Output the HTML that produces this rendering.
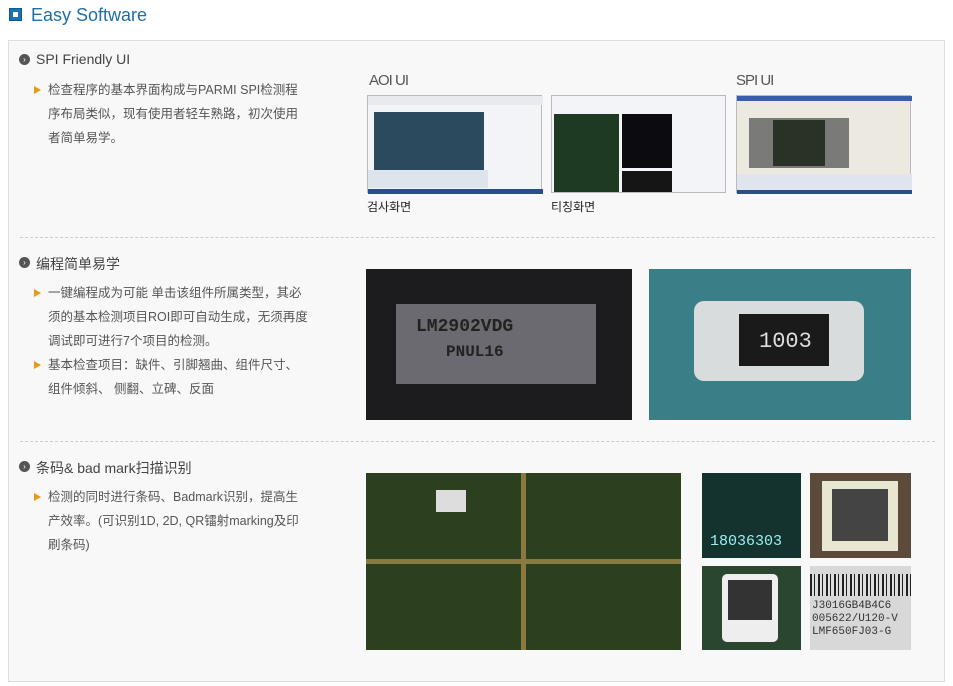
<!DOCTYPE html>
<html><head><meta charset="utf-8"><style>
*{margin:0;padding:0;box-sizing:border-box}
body{width:953px;height:686px;background:#fff;font-family:"Liberation Sans","Noto Sans CJK SC",sans-serif;position:relative;overflow:hidden}
.a{position:absolute}
.title{left:31px;top:5px;font-size:18px;color:#1f6fa6;}
.sq{left:9px;top:8px;width:13px;height:13px;background:#1a72b0;border:1px solid #0d5a90}
.sq i{position:absolute;left:3px;top:3px;width:5px;height:5px;background:#fff}
.box{left:8px;top:40px;width:937px;height:642px;background:#f8f8f8;border:1px solid #ddd}
.h{font-size:14px;color:#444;left:36px}
.dot{left:19px;width:11px;height:11px;border-radius:50%;background:#555;color:#fff;font-size:8px;line-height:11px;text-align:center}
.p{left:48px;font-size:12.5px;color:#555;line-height:24px;width:300px;white-space:nowrap}
.tri{left:34px;width:0;height:0;border-left:7px solid #e69a10;border-top:4px solid transparent;border-bottom:4px solid transparent}
.sep{left:20px;width:915px;border-top:1px dashed #ccc}
.lbl{font-size:15px;color:#555;letter-spacing:-1px}
.cap{font-size:12px;color:#222}
.img{border:1px solid #bbb}
</style></head><body>
<div class="a sq"><i></i></div>
<div class="a title">Easy Software</div>
<div class="a box"></div>

<div class="a dot" style="top:54px">›</div>
<div class="a h" style="top:51px">SPI Friendly UI</div>
<div class="a tri" style="top:86px"></div>
<div class="a p" style="top:78px">检查程序的基本界面构成与PARMI SPI检测程<br>序布局类似，现有使用者轻车熟路，初次使用<br>者简单易学。</div>
<div class="a lbl" style="left:369px;top:72px">AOI UI</div>
<div class="a lbl" style="left:736px;top:72px">SPI UI</div>
<div class="a img" style="left:367px;top:95px;width:175px;height:98px;background:#f2f4f8">
 <div class="a" style="left:6px;top:16px;width:110px;height:58px;background:#2b4a5e"></div>
 <div class="a" style="left:0;top:0;width:175px;height:9px;background:#e8eaee"></div>
 <div class="a" style="left:0;top:74px;width:120px;height:18px;background:#dde4ec"></div>
 <div class="a" style="left:0;top:93px;width:175px;height:5px;background:#2a4f88"></div>
</div>
<div class="a img" style="left:551px;top:95px;width:175px;height:98px;background:#f2f4f8">
 <div class="a" style="left:2px;top:18px;width:65px;height:78px;background:#1f3a22"></div>
 <div class="a" style="left:70px;top:18px;width:50px;height:54px;background:#0b0b10"></div>
 <div class="a" style="left:70px;top:75px;width:50px;height:21px;background:#151515"></div>
</div>
<div class="a img" style="left:736px;top:95px;width:175px;height:98px;background:#eceae0">
 <div class="a" style="left:0;top:0;width:175px;height:5px;background:#3a5fa8"></div>
 <div class="a" style="left:12px;top:22px;width:100px;height:50px;background:#7a7a78"></div>
 <div class="a" style="left:36px;top:24px;width:52px;height:46px;background:#2a3228"></div>
 <div class="a" style="left:0;top:78px;width:175px;height:16px;background:#e0e4ee"></div>
 <div class="a" style="left:0;top:94px;width:175px;height:4px;background:#2a4f88"></div>
</div>
<div class="a cap" style="left:367px;top:198px">검사화면</div>
<div class="a cap" style="left:551px;top:198px">티칭화면</div>
<div class="a sep" style="top:237px"></div>

<div class="a dot" style="top:257px">›</div>
<div class="a h" style="top:254px">编程简单易学</div>
<div class="a tri" style="top:289px"></div>
<div class="a p" style="top:281px">一键编程成为可能 单击该组件所属类型，其必<br>须的基本检测项目ROI即可自动生成，无须再度<br>调试即可进行7个项目的检测。</div>
<div class="a tri" style="top:361px"></div>
<div class="a p" style="top:353px">基本检查项目：缺件、引脚翘曲、组件尺寸、<br>组件倾斜、 侧翻、立碑、反面</div>
<div class="a" style="left:366px;top:269px;width:266px;height:151px;background:#1c1c1e">
 <div class="a" style="left:30px;top:35px;width:200px;height:80px;background:#6a6a70"></div>
 <div class="a" style="left:50px;top:48px;color:#222;font:bold 18px 'Liberation Mono',monospace">LM2902VDG</div>
 <div class="a" style="left:80px;top:74px;color:#222;font:bold 16px 'Liberation Mono',monospace">PNUL16</div>
</div>
<div class="a" style="left:649px;top:269px;width:262px;height:151px;background:#3a7e88">
 <div class="a" style="left:45px;top:32px;width:170px;height:80px;background:#d8dcdc;border-radius:10px"></div>
 <div class="a" style="left:90px;top:45px;width:90px;height:52px;background:#1a1a1a"></div>
 <div class="a" style="left:110px;top:60px;color:#ddd;font:22px 'Liberation Mono',monospace">1003</div>
</div>
<div class="a sep" style="top:441px"></div>

<div class="a dot" style="top:461px">›</div>
<div class="a h" style="top:458px">条码&amp; bad mark扫描识别</div>
<div class="a tri" style="top:493px"></div>
<div class="a p" style="top:485px">检测的同时进行条码、Badmark识别，提高生<br>产效率。(可识别1D, 2D, QR镭射marking及印<br>刷条码)</div>
<div class="a" style="left:366px;top:473px;width:315px;height:177px;background:#2c4020">
 <div class="a" style="left:0;top:86px;width:315px;height:5px;background:#8a7a40"></div>
 <div class="a" style="left:155px;top:0;width:5px;height:177px;background:#8a7a40"></div>
 <div class="a" style="left:70px;top:17px;width:30px;height:22px;background:#ddd"></div>
</div>
<div class="a" style="left:702px;top:473px;width:99px;height:85px;background:#14332e">
 <div class="a" style="left:8px;top:60px;color:#9ee;font:15px 'Liberation Mono',monospace">18036303</div>
</div>
<div class="a" style="left:810px;top:473px;width:101px;height:85px;background:#5c4a3a">
 <div class="a" style="left:12px;top:8px;width:76px;height:70px;background:#e8e6d0"></div>
 <div class="a" style="left:22px;top:16px;width:56px;height:52px;background:#444"></div>
</div>
<div class="a" style="left:702px;top:566px;width:99px;height:84px;background:#2a4630">
 <div class="a" style="left:20px;top:8px;width:56px;height:68px;background:#eee;border-radius:5px"></div>
 <div class="a" style="left:26px;top:14px;width:44px;height:40px;background:#333"></div>
</div>
<div class="a" style="left:810px;top:566px;width:101px;height:84px;background:#d8d8d8">
 <div class="a" style="left:0;top:8px;width:101px;height:22px;background:repeating-linear-gradient(90deg,#222 0 2px,#ddd 2px 4px,#222 4px 5px,#ddd 5px 8px)"></div>
 <div class="a" style="left:2px;top:34px;color:#333;font:11px/13px 'Liberation Mono',monospace">J3016GB4B4C6<br>005622/U120-V<br>LMF650FJ03-G</div>
</div>
</body></html>
